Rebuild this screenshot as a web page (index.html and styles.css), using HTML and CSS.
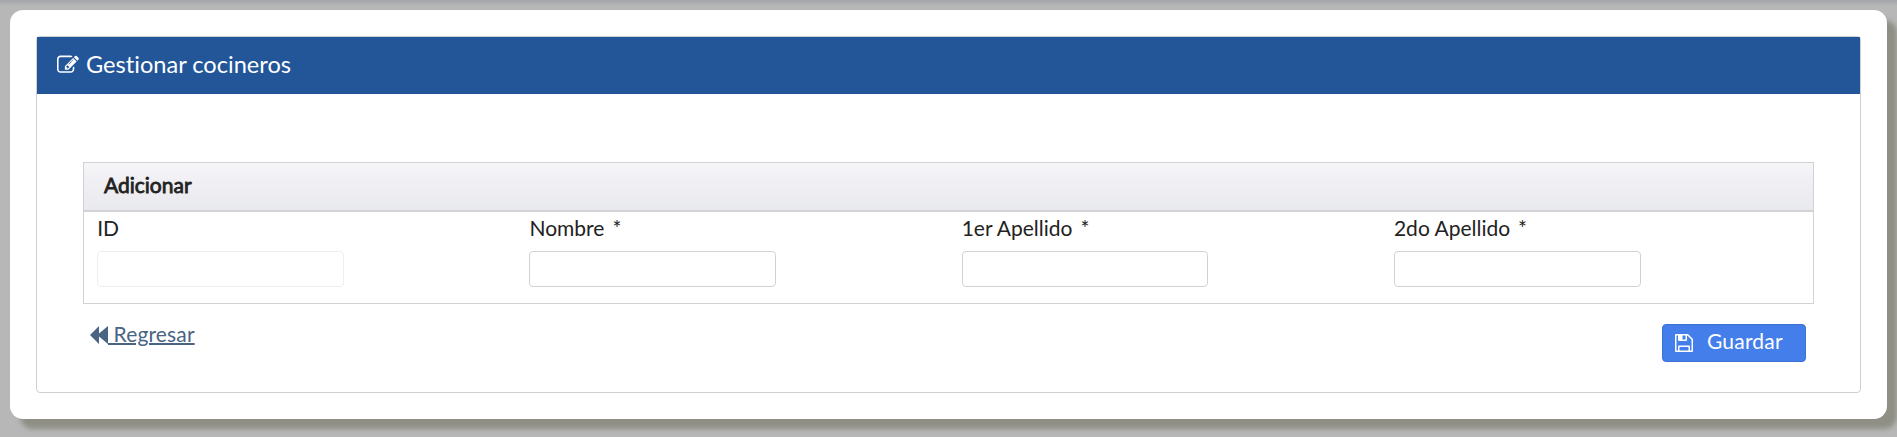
FILE: index.html
```html
<!DOCTYPE html>
<html lang="es">
<head>
<meta charset="utf-8">
<title>Gestionar cocineros</title>
<link rel="stylesheet" href="styles.css">
</head>
<body>
<main class="card">
  <section class="panel">
    <header class="panel-header">
      <svg class="edit-icon" viewBox="0 0 1792 1792" fill="currentColor" aria-hidden="true"><path d="M888 1184l116-116-152-152-116 116v56h96v96h56zm440-720q-16-16-33 1l-350 350q-17 17-1 33t33-1l350-350q17-17 1-33zm80 594v190q0 119-84.500 203.500t-203.500 84.500h-832q-119 0-203.500-84.500t-84.500-203.500v-832q0-119 84.500-203.500t203.500-84.500h832q63 0 117 25 15 7 18 23 3 17-9 29l-49 49q-14 14-32 8-23-6-45-6h-832q-66 0-113 47t-47 113v832q0 66 47 113t113 47h832q66 0 113-47t47-113v-126q0-13 9-22l64-64q15-15 35-7t20 29zm-96-738l288 288-672 672h-288v-288zm444 132l-92 92-288-288 92-92q28-28 68-28t68 28l152 152q28 28 28 68t-28 68z"/></svg>
      <h1 class="panel-title">Gestionar cocineros</h1>
    </header>
    <div class="panel-body">
      <form class="form-box">
        <h2 class="form-title">Adicionar</h2>
        <div class="fields">
          <div class="field"><label class="label" for="id">ID</label><input class="input input-disabled" id="id" disabled></div>
          <div class="field"><label class="label" for="nombre">Nombre<span class="required">*</span></label><input class="input" id="nombre"></div>
          <div class="field"><label class="label" for="ap1">1er Apellido<span class="required">*</span></label><input class="input" id="ap1"></div>
          <div class="field"><label class="label" for="ap2">2do Apellido<span class="required">*</span></label><input class="input" id="ap2"></div>
        </div>
      </form>
      <div class="actions">
        <a class="back" href="#"><svg class="back-icon" viewBox="0 0 18 18" fill="currentColor" aria-hidden="true"><path d="M9 0v7.500L18 0v18l-9-7.500V18L0 9z"/></svg><span class="back-text">&nbsp;Regresar</span></a>
        <button class="save" type="button"><svg class="save-icon" viewBox="0 0 18 18" fill="currentColor" aria-hidden="true"><path fill-rule="evenodd" d="M1 0h12l5 5v12q0 1-1 1H1q-1 0-1-1V1q0-1 1-1zm.5 1.500v15H3v-4q0-1 1-1h10q1 0 1 1v4h1.500V5.700l-4.200-4.200H12V6q0 1-1 1H4Q3 7 3 6V1.500zm6 0v4h3v-4zM4.500 13v3.500h9V13z"/></svg><span>Guardar</span></button>
      </div>
    </div>
  </section>
</main>
</body>
</html>
```
FILE: styles.css
```css
* { box-sizing: border-box; }
html { height: 100%; overflow: hidden; }
body {
  margin: 0;
  height: 100%;
  padding: 10px;
  background: linear-gradient(#a2a4a8, #b7b7b7 6px);
  color: #222;
  font-family: Lato, sans-serif;
  font-size: 21px;
  font-variant-ligatures: none;
  overflow: hidden;
}
.card {
  height: 409px;
  padding: 26px;
  background: #fff;
  border-radius: 13px;
  box-shadow: 10px 10px 5px #8f8f86;
}
.panel {
  height: 357px;
  border: 1px solid #d0d0d0;
  border-radius: 4px;
}
.panel-header {
  display: flex;
  align-items: center;
  height: 57px;
  padding-left: 20px;
  background: #235699;
  color: #fff;
}
.edit-icon { width: 22px; height: 22px; margin: 0 7px 1px 0; }
.panel-title { margin: 0; padding-bottom: 2px; font-size: 23.600px; line-height: 29px; font-weight: 400; }
.panel-body { padding: 68px 46px 0; }
.form-box { height: 142px; border: 1px solid #d2d2d4; }
.form-title {
  height: 49px;
  margin: 0;
  padding: 8px 20px 0;
  border-bottom: 2px solid #d2d2d6;
  background: linear-gradient(#f5f6f8, #f0eff4 40%, #e9eaee);
  font-size: 21px;
  line-height: 28px;
  font-weight: 400;
  -webkit-text-stroke: 0.8px #222;
}
.fields { display: grid; grid-template-columns: repeat(4, 1fr); padding-top: 1px; }
.field { display: flex; flex-direction: column; align-items: flex-start; padding-left: 13.2px; }
.label { height: 38px; line-height: 30px; }
.required { margin-left: 8px; }
.input {
  width: 246.6px;
  height: 36px;
  border: 1px solid #d2d2d2;
  border-radius: 4px;
  background: #fff;
}
.input-disabled { border-color: #eee; }
.actions { display: flex; justify-content: space-between; padding: 20px 8px 0 7px; }
.back { display: flex; height: 30px; color: #4a6484; line-height: 20px; text-decoration: none; }
.back-icon { width: 18px; height: 18px; margin-top: 2px; }
.back-text { letter-spacing: 0.15px; text-decoration: underline; text-decoration-thickness: 2px; }
.save {
  display: flex;
  align-items: center;
  width: 144px;
  height: 38px;
  padding: 0 0 5px 12px;
  border: 1px solid #3b71d2;
  border-radius: 4px;
  background: #447eeb;
  color: #fff;
  font: 21px Lato, sans-serif;
  letter-spacing: 0.2px;
}
.save-icon { width: 18px; height: 18px; margin: 5px 14px 0 0; }
```
